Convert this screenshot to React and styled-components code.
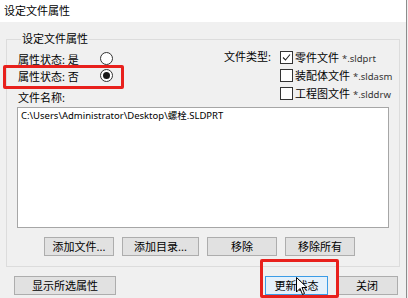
import React from "react";
import styled, { createGlobalStyle } from "styled-components";

const GlobalStyle = createGlobalStyle`
  html, body {
    margin: 0;
    padding: 0;
    background: #f0f0f0;
  }
  body {
    font-family: "Noto Sans", "Noto Sans CJK SC", sans-serif;
    font-size: 11px;
    color: #000;
  }
`;

const Window = styled.div`
  position: relative;
  width: 406px;
  height: 298px;
  background: #f0f0f0;
  border-right: 1px solid #8c8c8c;
  overflow: hidden;
  display: flex;
  flex-direction: column;
  white-space: nowrap;
`;

const TitleBar = styled.div`
  height: 22px;
  background: #fff;
  padding-left: 4px;
  line-height: 22px;
  font-size: 11px;
`;

const Body = styled.div`
  padding: 10px 6px 0 6px;
  display: flex;
  flex-direction: column;
`;

const GroupBox = styled.fieldset`
  margin: 0;
  padding: 4px 10px 10px 10px;
  border: 1px solid #dcdcdc;
  min-width: 0;
  display: flex;
  flex-direction: column;
`;

const Legend = styled.legend`
  padding: 0 1px;
  margin-left: 4px;
  line-height: 14px;
  font-size: 11px;
`;

const TopArea = styled.div`
  display: flex;
`;

const LeftCol = styled.div`
  width: 206px;
  flex: none;
  padding-left: 1px;
  display: flex;
  flex-direction: column;
`;

const RadioRow = styled.div`
  display: grid;
  grid-template-columns: 82px 14px;
  align-items: center;
  height: 17px;
`;

const Radio = styled.span`
  width: 11px;
  height: 11px;
  border-radius: 50%;
  border: 1px solid #333;
  background: #fff;
  display: flex;
  align-items: center;
  justify-content: center;
  &::after {
    content: "";
    width: 7px;
    height: 7px;
    border-radius: 50%;
    background: ${p => (p.$checked ? "#1a1a1a" : "transparent")};
  }
`;

const FieldLabel = styled.div`
  margin-top: 7px;
  line-height: 14px;
`;

const TypeBlock = styled.div`
  display: flex;
  flex: none;
  margin-top: -2px;
`;

const TypeLabel = styled.div`
  width: 56px;
  line-height: 18px;
`;

const CheckList = styled.div`
  display: flex;
  flex-direction: column;
`;

const CheckRow = styled.div`
  display: flex;
  align-items: center;
  height: 18px;
  gap: 2px;
`;

const Box = styled.span`
  width: 11px;
  height: 11px;
  flex: none;
  border: 1px solid #333;
  background: #fff;
  display: flex;
  align-items: center;
  justify-content: center;
`;

const Ext = styled.span`
  font-size: 9.5px;
  color: #333;
  margin-left: 3px;
`;

const ListBox = styled.div`
  margin-top: 2px;
  height: 115px;
  border: 1px solid #a6a6a6;
  background: #fff;
  padding: 2px 3px;
  font-size: 9.5px;
  line-height: 12px;
`;

const ButtonRow = styled.div`
  display: flex;
  gap: 8px;
  margin-top: 9px;
  padding-left: 27px;
`;

const Button = styled.button`
  width: ${p => p.$w}px;
  height: 19px;
  padding: 0;
  font-family: inherit;
  font-size: 11px;
  color: #000;
  background: ${p => (p.$hover ? "#e5f1fb" : "#e1e1e1")};
  border: 1px solid ${p => (p.$hover ? "#3c9ce6" : "#adadad")};
  line-height: 17px;
`;

const BottomRow = styled.div`
  display: flex;
  align-items: center;
  margin-top: 9px;
  padding: 0 2px 0 8px;
  gap: 8px;
`;

const Spacer = styled.div`
  flex: 1;
`;

const Highlight = styled.div`
  position: absolute;
  border: 3px solid #e8201c;
  border-radius: 2px;
  pointer-events: none;
`;

const Cursor = styled.svg`
  position: absolute;
  left: 296px;
  top: 277px;
`;

function Check() {
  return (
    <svg width="9" height="9" viewBox="0 0 9 9">
      <path d="M1 4.5 L3.5 7 L8 1.5" fill="none" stroke="#222" strokeWidth="1.1" />
    </svg>
  );
}

const types = [
  { name: "零件文件", ext: "*.sldprt", checked: true },
  { name: "装配体文件", ext: "*.sldasm", checked: false },
  { name: "工程图文件", ext: "*.slddrw", checked: false },
];

export default function App() {
  return (
    <>
      <GlobalStyle />
      <Window>
        <TitleBar>设定文件属性</TitleBar>
        <Body>
          <GroupBox>
            <Legend>设定文件属性</Legend>
            <TopArea>
              <LeftCol>
                <RadioRow>
                  <span>属性状态: 是</span>
                  <Radio />
                </RadioRow>
                <RadioRow>
                  <span>属性状态: 否</span>
                  <Radio $checked />
                </RadioRow>
                <FieldLabel>文件名称:</FieldLabel>
              </LeftCol>
              <TypeBlock>
                <TypeLabel>文件类型:</TypeLabel>
                <CheckList>
                  {types.map(t => (
                    <CheckRow key={t.ext}>
                      <Box>{t.checked && <Check />}</Box>
                      <span>
                        {t.name}
                        <Ext>{t.ext}</Ext>
                      </span>
                    </CheckRow>
                  ))}
                </CheckList>
              </TypeBlock>
            </TopArea>
            <ListBox>C:\Users\Administrator\Desktop\螺栓.SLDPRT</ListBox>
            <ButtonRow>
              <Button $w={70}>添加文件...</Button>
              <Button $w={77}>添加目录...</Button>
              <Button $w={70}>移除</Button>
              <Button $w={70}>移除所有</Button>
            </ButtonRow>
          </GroupBox>
          <BottomRow>
            <Button $w={102}>显示所选属性</Button>
            <Spacer />
            <Button $w={63} $hover>更新状态</Button>
            <Button $w={62}>关闭</Button>
          </BottomRow>
        </Body>
        <Highlight style={{ left: 3, top: 65, width: 115, height: 18 }} />
        <Highlight style={{ left: 260, top: 259, width: 73, height: 33 }} />
        <Cursor width="12" height="19" viewBox="0 0 12 19">
          <path d="M0.5 0.5 L0.5 15 L4 11.5 L6.5 17.5 L8.5 16.5 L6 10.5 L11 10.5 Z" fill="#fff" stroke="#000" strokeWidth="1" />
        </Cursor>
      </Window>
    </>
  );
}
